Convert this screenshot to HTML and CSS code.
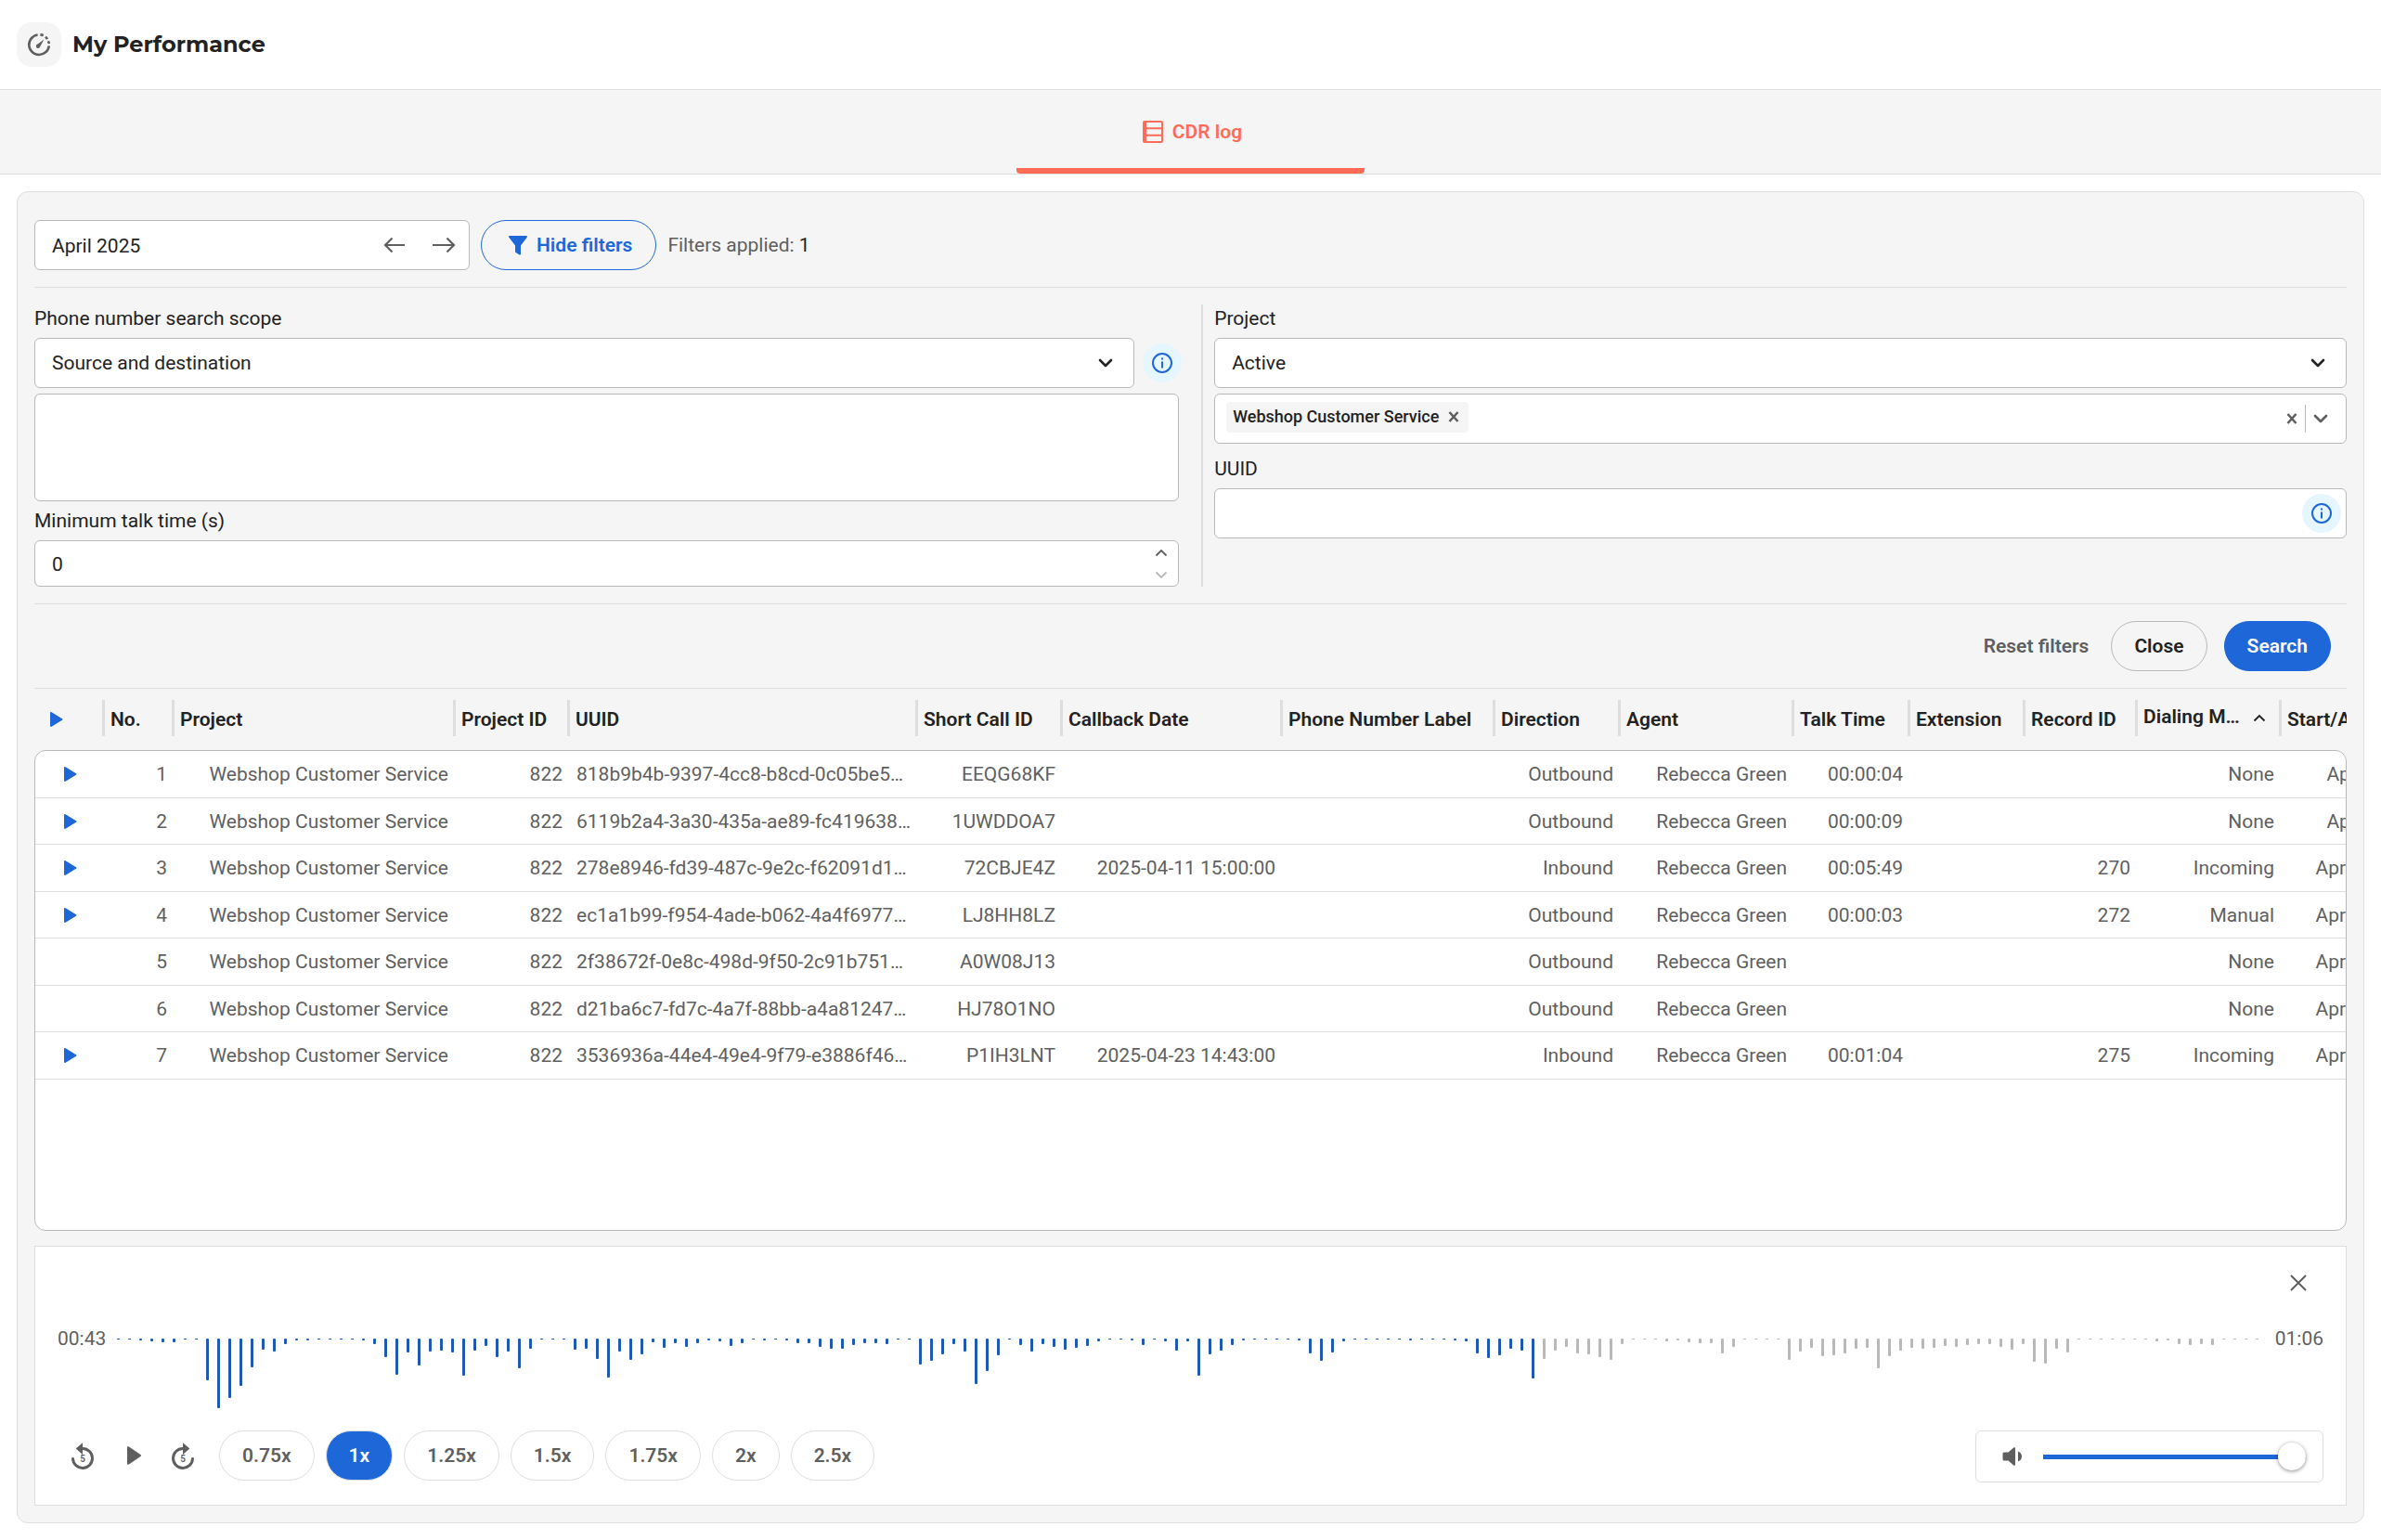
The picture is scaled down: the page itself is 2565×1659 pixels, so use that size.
FILE: index.html
```html
<!DOCTYPE html>
<html lang="en">
<head>
<meta charset="utf-8">
<title>My Performance</title>
<link rel="stylesheet" href="styles.css">
</head>
<body>
<svg class="sprite" aria-hidden="true">
  <symbol id="chevron" viewBox="0 0 16 10"><path d="M2 2l6 6 6-6" fill="none" stroke="currentColor" stroke-width="2.6" stroke-linecap="round" stroke-linejoin="round"/></symbol>
  <symbol id="chevron-thin" viewBox="0 0 14 9"><path d="M1.5 1.5L7 7l5.500-5.500" fill="none" stroke="currentColor" stroke-width="1.900"/></symbol>
  <symbol id="cross" viewBox="0 0 12 12"><path d="M1.500 1l9 10M10.500 1l-9 10" fill="none" stroke="currentColor" stroke-width="2.600"/></symbol>
  <symbol id="play" viewBox="0 0 14 16"><path d="M0 1.200C0 .2 .8-.2 1.600.3L13 7.300c.7.400.7 1 0 1.400L1.600 15.700C.8 16.200 0 15.800 0 14.800z" fill="currentColor"/></symbol>
  <symbol id="info" viewBox="0 0 24 24"><circle cx="12" cy="12" r="10" fill="none" stroke="currentColor" stroke-width="2"/><path d="M12 10.500V17.500M12 6.500v2" stroke="currentColor" stroke-width="2"/></symbol>
</svg>

<header class="page-header">
  <span class="page-icon">
    <svg width="28" height="28" viewBox="0 0 28 28" fill="none" stroke="currentColor" stroke-width="2.600"><path d="M12.600 3.500A10.800 10.800 0 1 0 24.800 15.400"/><path d="M15.400 3.400q1.800.2 3.300.9"/><path d="M21 5.800q1.200 1 2 2.300"/><path d="M24 10.200q.6 1.300.8 2.900"/><path d="M19.400 8.600l-6.800 5a2.200 2.200 0 1 0 2.600 2.600z" fill="currentColor" stroke="none"/></svg>
  </span>
  <h1 class="page-title">My Performance</h1>
</header>

<nav class="tabs">
  <a class="tab" href="#cdr-log" aria-current="page">
    <svg width="24" height="24" viewBox="0 0 24 24" fill="none" stroke="currentColor" stroke-width="2"><rect x="2" y="1" width="20" height="22" rx="1"/><path d="M3.500 1v22" stroke-width="3"/><path d="M3 8.200h19M3 15.700h19"/></svg>
    <span>CDR log</span>
  </a>
</nav>

<main class="panel" id="cdr-log">
  <div class="toolbar">
    <div class="field month">
      <input class="bare" type="text" value="April 2025" aria-label="Month" readonly>
      <button class="arrow" type="button" aria-label="Previous month"><svg width="24" height="18" viewBox="0 0 24 18" fill="none" stroke="currentColor" stroke-width="2.200"><path d="M23 9H2.500M9.500 1.500L2 9l7.500 7.500"/></svg></button>
      <button class="arrow" type="button" aria-label="Next month"><svg width="26" height="18" viewBox="0 0 26 18" fill="none" stroke="currentColor" stroke-width="2.200"><path d="M1 9h23M16.500 1.500L24 9l-7.500 7.500"/></svg></button>
    </div>
    <button class="pill pill-outline" type="button">
      <svg width="20" height="21" viewBox="0 0 20 21"><path d="M1.200 0h17.600c1 0 1.500 1 .9 1.800L13 10.500V19.500c0 1-1 1.400-1.800.8L7.600 18c-.4-.3-.6-.7-.6-1.200V10.500L.3 1.800C-.3 1 .2 0 1.200 0z" fill="currentColor"/></svg>
      <span>Hide filters</span>
    </button>
    <p class="applied">Filters applied: <span class="applied-count">1</span></p>
  </div>

  <form class="filters">
    <div class="filter-grid">
      <div class="filter-col filter-col-left">
        <label class="label" for="scope">Phone number search scope</label>
        <div class="scope-row">
          <div class="select">
            <select class="field" id="scope"><option>Source and destination</option></select>
            <svg class="select-icon" width="16" height="10"><use href="#chevron"/></svg>
          </div>
          <button class="info info-beside" type="button" aria-label="About search scope"><svg width="24" height="24"><use href="#info"/></svg></button>
        </div>
        <textarea class="field numbers" aria-label="Phone numbers"></textarea>
        <label class="label" for="talk">Minimum talk time (s)</label>
        <div class="field number">
          <input class="bare" id="talk" type="number" value="0" min="0">
          <div class="steps">
            <button type="button" aria-label="Increase"><svg class="up" width="14" height="9"><use href="#chevron-thin"/></svg></button>
            <button type="button" aria-label="Decrease" disabled><svg width="14" height="9"><use href="#chevron-thin"/></svg></button>
          </div>
        </div>
      </div>
      <div class="filter-col filter-col-right">
        <label class="label" for="project">Project</label>
        <div class="select">
          <select class="field" id="project"><option>Active</option></select>
          <svg class="select-icon" width="16" height="10"><use href="#chevron"/></svg>
        </div>
        <div class="field multi">
          <span class="chip">Webshop Customer Service<button type="button" aria-label="Remove Webshop Customer Service"><svg width="12" height="12"><use href="#cross"/></svg></button></span>
          <div class="multi-tools">
            <button type="button" aria-label="Clear projects"><svg width="12" height="12"><use href="#cross"/></svg></button>
            <span class="multi-line"></span>
            <button type="button" aria-label="Open projects"><svg width="16" height="10"><use href="#chevron"/></svg></button>
          </div>
        </div>
        <label class="label label-spaced" for="uuid">UUID</label>
        <div class="field with-info">
          <input class="bare" id="uuid" type="text">
          <button class="info" type="button" aria-label="About UUID"><svg width="24" height="24"><use href="#info"/></svg></button>
        </div>
      </div>
    </div>
    <div class="actions">
      <button class="link-button" type="reset">Reset filters</button>
      <button class="pill pill-neutral" type="button">Close</button>
      <button class="pill pill-primary" type="button">Search</button>
    </div>
  </form>

  <table class="log">
    <thead>
      <tr>
        <th class="play-all"><button class="play" type="button" aria-label="Play all"><svg width="14" height="16"><use href="#play"/></svg></button></th>
        <th>No.</th><th>Project</th><th>Project ID</th><th>UUID</th><th>Short Call ID</th><th>Callback Date</th><th>Phone Number Label</th><th>Direction</th><th>Agent</th><th>Talk Time</th><th>Extension</th><th>Record ID</th>
        <th class="sorted" aria-sort="ascending"><span class="sorted-text">Dialing Mode</span><svg class="up" width="14" height="9"><use href="#chevron-thin"/></svg></th>
        <th class="last">Start/Answer</th>
      </tr>
    </thead>
    <tbody>
      <tr><td><button class="play" type="button" aria-label="Play call 1"><svg width="14" height="16"><use href="#play"/></svg></button></td><td>1</td><td>Webshop Customer Service</td><td>822</td><td class="uuid">818b9b4b-9397-4cc8-b8cd-0c05be5…</td><td>EEQG68KF</td><td></td><td></td><td>Outbound</td><td>Rebecca Green</td><td>00:00:04</td><td></td><td></td><td>None</td><td>Apr 9</td></tr>
      <tr><td><button class="play" type="button" aria-label="Play call 2"><svg width="14" height="16"><use href="#play"/></svg></button></td><td>2</td><td>Webshop Customer Service</td><td>822</td><td class="uuid">6119b2a4-3a30-435a-ae89-fc419638…</td><td>1UWDDOA7</td><td></td><td></td><td>Outbound</td><td>Rebecca Green</td><td>00:00:09</td><td></td><td></td><td>None</td><td>Apr 9</td></tr>
      <tr><td><button class="play" type="button" aria-label="Play call 3"><svg width="14" height="16"><use href="#play"/></svg></button></td><td>3</td><td>Webshop Customer Service</td><td>822</td><td class="uuid">278e8946-fd39-487c-9e2c-f62091d1…</td><td>72CBJE4Z</td><td>2025-04-11 15:00:00</td><td></td><td>Inbound</td><td>Rebecca Green</td><td>00:05:49</td><td></td><td>270</td><td>Incoming</td><td>Apr 11</td></tr>
      <tr><td><button class="play" type="button" aria-label="Play call 4"><svg width="14" height="16"><use href="#play"/></svg></button></td><td>4</td><td>Webshop Customer Service</td><td>822</td><td class="uuid">ec1a1b99-f954-4ade-b062-4a4f6977…</td><td>LJ8HH8LZ</td><td></td><td></td><td>Outbound</td><td>Rebecca Green</td><td>00:00:03</td><td></td><td>272</td><td>Manual</td><td>Apr 11</td></tr>
      <tr><td></td><td>5</td><td>Webshop Customer Service</td><td>822</td><td class="uuid">2f38672f-0e8c-498d-9f50-2c91b751…</td><td>A0W08J13</td><td></td><td></td><td>Outbound</td><td>Rebecca Green</td><td></td><td></td><td></td><td>None</td><td>Apr 11</td></tr>
      <tr><td></td><td>6</td><td>Webshop Customer Service</td><td>822</td><td class="uuid">d21ba6c7-fd7c-4a7f-88bb-a4a81247…</td><td>HJ78O1NO</td><td></td><td></td><td>Outbound</td><td>Rebecca Green</td><td></td><td></td><td></td><td>None</td><td>Apr 11</td></tr>
      <tr><td><button class="play" type="button" aria-label="Play call 7"><svg width="14" height="16"><use href="#play"/></svg></button></td><td>7</td><td>Webshop Customer Service</td><td>822</td><td class="uuid">3536936a-44e4-49e4-9f79-e3886f46…</td><td>P1IH3LNT</td><td>2025-04-23 14:43:00</td><td></td><td>Inbound</td><td>Rebecca Green</td><td>00:01:04</td><td></td><td>275</td><td>Incoming</td><td>Apr 23</td></tr>
    </tbody>
  </table>

  <section class="player" aria-label="Recording player">
    <button class="icon-button player-close" type="button" aria-label="Close player"><svg width="18" height="18" viewBox="0 0 18 18"><path d="M1 1l16 16M17 1L1 17" fill="none" stroke="currentColor" stroke-width="2"/></svg></button>
    <div class="timeline">
      <span class="time">00:43</span>
      <div class="wave" id="wave"></div>
      <span class="time">01:06</span>
    </div>
    <div class="controls">
      <div class="transport">
        <button class="icon-button" type="button" aria-label="Back 5 seconds"><svg width="24" height="29" viewBox="0 0 24 29"><path d="M12 6.500A10.500 10.500 0 1 1 1.500 17.500" fill="none" stroke="currentColor" stroke-width="3" stroke-linecap="round"/><path d="M12 .2V13L4.700 6.600z" fill="currentColor"/><text class="skip" x="12" y="21" text-anchor="middle">5</text></svg></button>
        <button class="icon-button" type="button" aria-label="Play"><svg width="20" height="20" viewBox="0 0 20 20"><path d="M4 1.600C4 .4 5 0 5.900.6L18.400 9c.8.6.8 1.400 0 2L5.900 19.400C5 20 4 19.600 4 18.400z" fill="currentColor"/></svg></button>
        <button class="icon-button" type="button" aria-label="Forward 5 seconds"><svg width="24" height="29" viewBox="0 0 24 29"><path d="M12 6.500A10.500 10.500 0 1 0 22.500 17.500" fill="none" stroke="currentColor" stroke-width="3" stroke-linecap="round"/><path d="M12 .2V13L19.300 6.600z" fill="currentColor"/><text class="skip" x="12" y="21" text-anchor="middle">5</text></svg></button>
      </div>
      <div class="speeds">
        <button class="pill pill-speed" type="button">0.75x</button>
        <button class="pill pill-speed pill-current" type="button" aria-pressed="true">1x</button>
        <button class="pill pill-speed" type="button">1.25x</button>
        <button class="pill pill-speed" type="button">1.5x</button>
        <button class="pill pill-speed" type="button">1.75x</button>
        <button class="pill pill-speed" type="button">2x</button>
        <button class="pill pill-speed" type="button">2.5x</button>
      </div>
      <div class="volume">
        <svg width="22" height="20" viewBox="0 0 22 20" fill="currentColor"><path d="M2 5.500H6.500L12.200.5Q14 -.5 14 1.500V18.500Q14 20.500 12.200 19.500L6.500 14.500H2Q.5 14.500.5 13V7Q.5 5.500 2 5.500z"/><path d="M17 4.500Q21 6 21 10T17 15.500z"/></svg>
        <input class="range" type="range" min="0" max="100" value="100" aria-label="Volume">
      </div>
    </div>
  </section>
</main>
<script src="wave.js"></script>
</body>
</html>
```
FILE: styles.css
```css
* { box-sizing: border-box; }

:root {
  --ink: #222;
  --muted: #5f5f5f;
  --line: #dedede;
  --edge: #b9b9b9;
  --blue: #1d67d8;
  --wave: #1f59b0;
  --coral: #ff6b56;
  --surface: #f5f5f5;
}

body {
  margin: 0;
  background: #fff;
  color: var(--ink);
  font: 400 21px/30px Roboto, "Liberation Sans", sans-serif;
}

button, input, select, textarea { font: inherit; color: inherit; margin: 0; }
button { border: 0; padding: 0; background: none; cursor: pointer; }
svg { display: block; flex: none; }
.sprite { position: absolute; width: 0; height: 0; }
.up { transform: rotate(180deg); }

/* Header */
.page-header {
  display: flex;
  align-items: center;
  gap: 12px;
  height: 96px;
  padding: 0 18px;
}
.page-icon {
  display: grid;
  place-items: center;
  width: 48px;
  height: 48px;
  border-radius: 16px;
  background: var(--surface);
  color: var(--muted);
}
.page-title {
  margin: 0;
  font: 700 24px/36px Montserrat, Inter, sans-serif;
}

/* Tabs */
.tabs {
  display: flex;
  justify-content: center;
  height: 92px;
  border: solid var(--line);
  border-width: 1px 0;
  background: var(--surface);
}
.tab {
  display: flex;
  align-items: center;
  justify-content: center;
  gap: 9px;
  width: 375px;
  padding: 6px 0 0 3px;
  border-bottom: 6px solid var(--coral);
  border-radius: 4px;
  color: var(--coral);
  font-weight: 600;
  text-decoration: none;
}

/* Panel */
.panel {
  margin: 18px;
  padding: 30px 18px 18px;
  border: 1px solid var(--line);
  border-radius: 12px;
  background: var(--surface);
}
.field {
  display: flex;
  width: 100%;
  height: 54px;
  padding: 0 18px;
  border: 1px solid var(--edge);
  border-radius: 6px;
  background: #fff;
}
.bare {
  flex: 1;
  min-width: 0;
  padding: 2px 0 0;
  border: 0;
  outline: 0;
  background: none;
}
.pill {
  display: flex;
  align-items: center;
  height: 54px;
  padding: 0 24px;
  border: 1px solid var(--line);
  border-radius: 27px;
  font-weight: 600;
}
.pill-outline { gap: 10px; padding: 0 25px 0 29px; border-color: var(--blue); color: var(--blue); }
.pill-neutral { border-color: var(--edge); }
.pill-primary { border-color: var(--blue); background: var(--blue); color: #fff; }
.pill-speed { color: var(--muted); }
.pill-current { background: var(--blue); color: #fff; }

.toolbar { display: flex; align-items: center; gap: 12px; padding-bottom: 18px; }
.month { align-items: center; gap: 28px; width: 469px; padding-right: 14px; }
.arrow { color: var(--muted); }
.applied { margin: 0; color: var(--muted); }
.applied-count { color: var(--ink); }

/* Filters */
.filters { border: solid var(--line); border-width: 1px 0; }
.filter-grid {
  display: grid;
  grid-template-columns: 46fr 45fr;
  padding: 18px 0;
}
.filter-col { display: flex; flex-direction: column; gap: 6px; }
.filter-col-left { padding-right: 24px; border-right: 2px solid var(--line); }
.filter-col-right { padding-left: 12px; }
.label-spaced { margin-top: 6px; }
.scope-row { display: flex; align-items: center; }
.select { position: relative; flex: none; }
.scope-row .select { flex: 1; }
.select .field { appearance: none; outline: 0; }
.select-icon { position: absolute; right: 23px; top: 22px; pointer-events: none; }
.info {
  display: grid;
  place-items: center;
  flex: none;
  width: 42px;
  height: 42px;
  border-radius: 50%;
  background: #e6f6ff;
  color: var(--blue);
}
.info-beside { margin: 0 -3px 0 9px; }
.numbers { height: 116px; resize: none; outline: 0; }
.number { height: 50px; padding-right: 11px; }
.number .bare { appearance: textfield; }
.number .bare::-webkit-inner-spin-button { appearance: none; }
.steps { display: flex; flex-direction: column; }
.steps button { display: grid; place-items: center; flex: 1; color: var(--muted); }
.steps button:disabled { color: var(--edge); }
.multi { align-items: flex-start; justify-content: space-between; padding: 8px 19px 8px 12px; }
.chip {
  display: flex;
  align-items: center;
  gap: 10px;
  height: 33px;
  padding: 0 10px 2px 7px;
  border-radius: 4px;
  background: var(--surface);
  font-size: 18px;
  font-weight: 500;
}
.chip button, .multi-tools button { color: var(--muted); }
.multi-tools { display: flex; align-items: center; align-self: center; gap: 8px; }
.multi-line { width: 1px; height: 30px; background: var(--edge); }
.with-info { align-items: center; padding-right: 5px; }

.actions {
  display: flex;
  justify-content: flex-end;
  align-items: center;
  gap: 18px;
  padding: 18px 17px;
  border-top: 1px solid var(--line);
}
.link-button { padding: 0 6px; color: var(--muted); font-weight: 600; }

.log, .log thead, .log tbody { display: block; }
.log thead { padding: 12px 0 15px; overflow: hidden; }
.log tr {
  display: grid;
  grid-template-columns: 76px 75px 303px 123px 375px 156px 237px 229px 135px 187px 125px 124px 121px 155px 106px;
  width: max-content;
}
.log th {
  height: 39px;
  padding: 6px 0 3px 6px;
  border-right: 3px solid var(--line);
  font-weight: 600;
  text-align: left;
  white-space: nowrap;
}
.log .play-all { display: flex; align-items: center; padding: 3px 0 0 17px; }
.log .sorted { display: flex; align-items: center; justify-content: space-between; padding: 0 14px 0 6px; }
.sorted-text { max-width: 107px; padding-bottom: 4px; overflow: hidden; text-overflow: ellipsis; }
.log .last { border: 0; }
.log tbody {
  min-height: 518px;
  overflow: hidden;
  border: 1px solid var(--edge);
  border-radius: 12px;
  background: #fff;
  color: var(--muted);
}
.log tbody tr { height: 50px; border-bottom: 1px solid var(--line); }
.log tbody tr:nth-child(odd) { height: 51px; }
.log td { padding: 10px 9px 9px 0; text-align: right; white-space: nowrap; }
.log td:first-child { display: grid; place-items: center; padding: 0; }
.log .uuid { padding-left: 6px; text-align: left; }
.play { color: var(--blue); }

/* Player */
.player {
  display: flex;
  flex-direction: column;
  margin-top: 16px;
  padding: 12px 24px 24px;
  border: 1px solid var(--line);
  background: #fff;
  color: var(--muted);
}
.icon-button { display: grid; place-items: center; width: 54px; height: 54px; }
.player-close { align-self: flex-end; }
.timeline { display: flex; gap: 12px; height: 90px; margin: 18px 0 24px; }
.wave {
  display: flex;
  flex: 1;
  align-items: flex-start;
  justify-content: space-between;
  padding: 15px 4px 0 0;
}
.bar { width: 3px; border-radius: 1px; background: var(--edge); }
.bar-played { background: var(--wave); }
.controls { display: flex; align-items: flex-start; gap: 12px; }
.transport { display: flex; }
.speeds { display: flex; gap: 12px; }
.skip { fill: currentColor; font-size: 10px; font-weight: 600; }
.volume {
  display: flex;
  align-items: center;
  gap: 22px;
  width: 375px;
  height: 56px;
  margin-left: auto;
  padding: 0 18px 0 28px;
  border: 1px solid var(--line);
  border-radius: 6px;
}
.range {
  flex: 1;
  min-width: 0;
  height: 30px;
  appearance: none;
  background: linear-gradient(var(--blue), var(--blue)) center / 100% 5px no-repeat;
}
.range::-webkit-slider-thumb {
  appearance: none;
  width: 30px;
  height: 30px;
  border-radius: 50%;
  background: #fff;
  box-shadow: 0 1px 4px rgba(0, 0, 0, .45);
}
```
FILE: wave.js
```js
// Peak height of each slice of the recording, in pixels.
const peaks = [
  1, 1, 2, 3, 4, 4, 1, 1, 45, 75, 64, 51, 31, 12, 14, 6, 2, 2, 1, 1, 1, 1, 2, 6, 20, 39, 15, 29, 14, 13, 15, 40,
  13, 8, 20, 14, 32, 11, 1, 1, 1, 12, 11, 22, 42, 14, 23, 17, 4, 10, 5, 9, 5, 2, 3, 8, 5, 1, 2, 1, 2, 5, 5, 9,
  11, 11, 7, 5, 5, 6, 1, 1, 28, 24, 17, 6, 14, 49, 35, 18, 1, 7, 14, 6, 9, 12, 10, 8, 3, 1, 1, 2, 7, 1, 3, 13,
  3, 40, 17, 13, 7, 2, 1, 1, 1, 1, 2, 16, 24, 15, 3, 1, 1, 1, 1, 1, 2, 1, 1, 1, 2, 3, 16, 21, 18, 11, 13, 43,
  22, 13, 9, 16, 17, 20, 23, 6, 1, 1, 1, 3, 2, 4, 5, 5, 16, 9, 1, 1, 1, 1, 23, 14, 10, 19, 18, 16, 11, 10, 32, 19,
  13, 10, 11, 10, 8, 9, 7, 6, 6, 9, 12, 6, 25, 27, 11, 15, 1, 1, 1, 1, 1, 1, 1, 3, 2, 6, 7, 6, 7, 1, 1, 1, 1
];
const played = 128;

const wave = document.getElementById("wave");
peaks.forEach((peak, i) => {
  const bar = document.createElement("span");
  bar.className = i < played ? "bar bar-played" : "bar";
  bar.style.height = peak + "px";
  wave.append(bar);
});
```
